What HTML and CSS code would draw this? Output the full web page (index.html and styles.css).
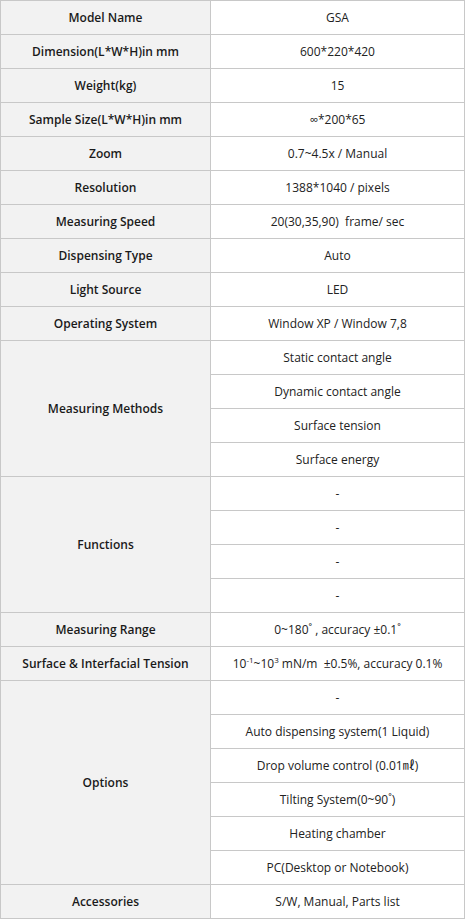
FILE: index.html
```html
<!DOCTYPE html>
<html>
<head>
<meta charset="utf-8">
<link rel="stylesheet" href="styles.css">
</head>
<body>
<table class="spec">
<colgroup><col class="c-label"><col class="c-value"></colgroup>
<tbody>
<tr><th>Model Name</th><td>GSA</td></tr>
<tr><th>Dimension(L*W*H)in mm</th><td>600*220*420</td></tr>
<tr><th>Weight(kg)</th><td>15</td></tr>
<tr><th>Sample Size(L*W*H)in mm</th><td>∞*200*65</td></tr>
<tr><th>Zoom</th><td>0.7~4.5x / Manual</td></tr>
<tr><th>Resolution</th><td>1388*1040 / pixels</td></tr>
<tr><th>Measuring Speed</th><td>20(30,35,90)&nbsp; frame/ sec</td></tr>
<tr><th>Dispensing Type</th><td>Auto</td></tr>
<tr><th>Light Source</th><td>LED</td></tr>
<tr><th>Operating System</th><td>Window XP / Window 7,8</td></tr>
<tr><th rowspan="4">Measuring Methods</th><td>Static contact angle</td></tr>
<tr><td>Dynamic contact angle</td></tr>
<tr><td>Surface tension</td></tr>
<tr><td>Surface energy</td></tr>
<tr><th rowspan="4">Functions</th><td>-</td></tr>
<tr><td>-</td></tr>
<tr><td>-</td></tr>
<tr><td>-</td></tr>
<tr><th>Measuring Range</th><td>0~180˚ , accuracy ±0.1˚</td></tr>
<tr><th>Surface &amp; Interfacial Tension</th><td>10<sup>-1</sup>~10<sup>3</sup> mN/m&nbsp; ±0.5%, accuracy 0.1%</td></tr>
<tr><th rowspan="6">Options</th><td>-</td></tr>
<tr><td>Auto dispensing system(1 Liquid)</td></tr>
<tr><td>Drop volume control (0.01㎖)</td></tr>
<tr><td>Tilting System(0~90˚)</td></tr>
<tr><td>Heating chamber</td></tr>
<tr><td>PC(Desktop or Notebook)</td></tr>
<tr><th>Accessories</th><td>S/W, Manual, Parts list</td></tr>
</tbody>
</table>
</body>
</html>
```
FILE: styles.css
```css
html, body {
  margin: 0;
  padding: 0;
  background: #fff;
}
.spec {
  width: 465px;
  border-collapse: collapse;
  table-layout: fixed;
  font-family: "Open Sans", "Noto Sans CJK KR", sans-serif;
  font-size: 12px;
  color: #222;
}
.c-label { width: 210px; }
.spec tr { height: 34px; }
.spec th, .spec td {
  border: 1px solid #c8c8c8;
  padding: 1px 0 0;
  text-align: center;
  vertical-align: middle;
  line-height: 16px;
}
.spec th {
  background: #f2f2f2;
  font-weight: 600;
  color: #1a1a1a;
}
.spec td {
  background: #fff;
  font-weight: 400;
}
.spec sup {
  font-size: 8px;
  line-height: 0;
  vertical-align: 5px;
}
```
